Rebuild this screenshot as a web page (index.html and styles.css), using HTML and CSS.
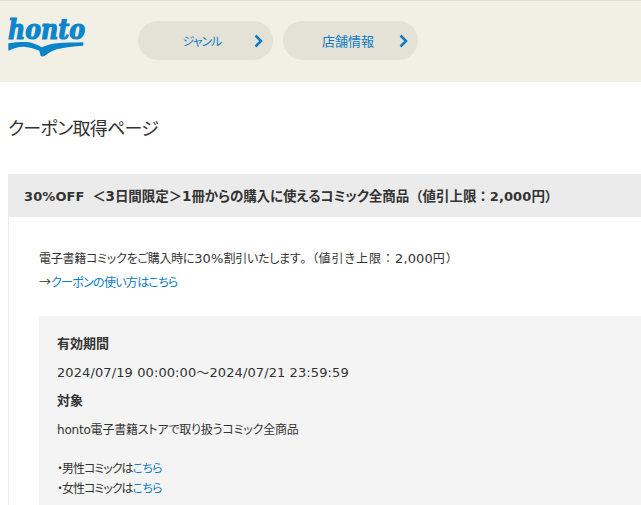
FILE: index.html
```html
<!DOCTYPE html>
<html lang="ja">
<head>
<meta charset="utf-8">
<title>クーポン取得ページ</title>
<link rel="stylesheet" href="styles.css">
</head>
<body>
<header class="site-header">
  <a class="logo" href="#" aria-label="honto">
    <svg width="78" height="40" viewBox="0 0 78 40">
      <text class="logo-text" x="0" y="21" textLength="77" lengthAdjust="spacingAndGlyphs">honto</text>
      <path class="logo-swoosh" d="M0.300 25.300C7 24.300 13 23.800 18.700 24C24 24.300 29 26.500 33.700 29.300C38 27.500 43 25.800 48.700 25.300C57 24.600 66 24.500 75.300 24.300L75.300 27.700C66 28.200 57 29 48.700 31.300C44 32.800 40.500 35.300 37 37.700C35.500 38.700 33.500 38.700 32.700 38L31.300 32.700C26 30.500 21 29 15.300 28.700C10 28.700 5 30.500 0.300 32.700Z"/>
    </svg>
  </a>
  <nav class="main-nav">
    <a class="nav-pill" href="#"><span class="nav-label nav-label-kana">ジャンル</span>
      <svg class="chev" width="9" height="14" viewBox="0 0 9 14"><path d="M1.500 1.500L7 7L1.500 12.500"/></svg></a>
    <a class="nav-pill" href="#"><span class="nav-label">店舗情報</span>
      <svg class="chev" width="9" height="14" viewBox="0 0 9 14"><path d="M1.500 1.500L7 7L1.500 12.500"/></svg></a>
  </nav>
</header>
<main class="page">
  <h1 class="page-title">クーポン取得ページ</h1>
  <section class="coupon">
    <h2 class="coupon-title"><span class="latin">30%OFF</span> <span class="wide">＜</span>3日間限定<span class="wide">＞</span>1冊からの購入に使えるコミック全商品<span class="wide">（</span>値引上限<span class="wide">：</span><span class="latin">2,000</span>円<span class="wide">）</span></h2>
    <div class="coupon-body">
      <p class="intro"><span class="intro-head">電子書籍コミックをご購入時に<span class="latin">30%</span>割引いたします</span><span class="wide">。（</span><span class="intro-tail">値引き上限<span class="wide">：</span><span class="latin">2,000</span>円<span class="wide">）</span></span><br><span class="wide">→</span><a class="tight" href="#">クーポンの使い方はこちら</a></p>
      <div class="details">
        <h3 class="detail-head">有効期間</h3>
        <p class="detail-text detail-date">2024/07/19 00:00:00～2024/07/21 23:59:59</p>
        <h3 class="detail-head">対象</h3>
        <p class="detail-text detail-target">honto電子書籍ストアで取り扱うコミック全商品</p>
        <p class="detail-list">・男性コミックは<a class="here" href="#">こちら</a><br>・女性コミックは<a class="here" href="#">こちら</a></p>
      </div>
    </div>
  </section>
</main>
</body>
</html>
```
FILE: styles.css
```css
html, body {
  margin: 0;
  padding: 0;
  height: 505px;
  overflow: hidden;
}
body {
  background: #fff;
  color: #333;
  font-family: "DejaVu Sans", "Noto Sans CJK JP", sans-serif;
  font-size: 12px;
  font-feature-settings: "palt";
}
a { color: #0e7cc4; text-decoration: none; }
.wide {
  font-family: "Noto Sans CJK JP", sans-serif;
  font-feature-settings: normal;
  line-height: 1;
}
.latin { font-size: 13px; letter-spacing: .1px; line-height: 1; }
.site-header {
  display: flex;
  align-items: flex-start;
  height: 81px;
  background: #f2efe4;
  border-top: 1px solid #dfe0de;
}
.logo { display: block; width: 78px; height: 40px; margin: 17px 0 0 8px; }
.logo svg { display: block; overflow: visible; }
.logo-text {
  font-family: "DejaVu Serif", serif;
  font-weight: 700;
  font-style: italic;
  font-size: 27px;
  fill: #0a85cc;
  stroke: #0a85cc;
  stroke-width: 1.200px;
}
.logo-swoosh { fill: #0a85cc; }
.main-nav { display: flex; gap: 10px; margin: 20px 0 0 52px; }
.nav-pill {
  position: relative;
  display: flex;
  align-items: center;
  justify-content: center;
  width: 135px;
  height: 39px;
  border-radius: 20px;
  background: #e4e2d6;
  font-size: 13px;
}
.nav-label { margin-right: 5px; }
.nav-label-kana { margin-right: 7px; font-size: 12px; letter-spacing: -1px; }
.chev { position: absolute; right: 10px; top: 13px; }
.chev path { fill: none; stroke: #0e7cc4; stroke-width: 2.500; }
.page { padding: 0 0 0 8px; width: 700px; }
.page-title {
  margin: 34px 0 0;
  font-size: 18px;
  font-weight: 400;
  line-height: 26px;
  letter-spacing: -.7px;
}
.coupon { margin-top: 32px; border-left: 1px solid #ececec; }
.coupon-title {
  margin: 0 0 0 -1px;
  padding: 1px 0 0 16px;
  height: 42px;
  line-height: 43px;
  background: #ebebeb;
  font-size: 13.500px;
  font-weight: 700;
  white-space: nowrap;
  word-spacing: 3px;
  letter-spacing: -.07px;
}
.coupon-body { padding: 30px 0 0 30px; }
.intro { margin: 0; line-height: 24px; font-size: 12px; }
.intro-head { letter-spacing: -.25px; }
.intro-tail { letter-spacing: 1px; }
.tight { letter-spacing: -.7px; }
.details { margin-top: 21px; padding: 18px 18px 20px; background: #f4f4f4; }
.detail-head { margin: 0; font-size: 13px; font-weight: 700; line-height: 20px; }
.detail-text { margin: 9px 0 8px; line-height: 20px; }
.detail-date { font-size: 13px; letter-spacing: .1px; }
.detail-target { letter-spacing: -.2px; }
.detail-list { margin: 19px 0 0; line-height: 20px; letter-spacing: -1px; }
.here { letter-spacing: -.6px; }
```
